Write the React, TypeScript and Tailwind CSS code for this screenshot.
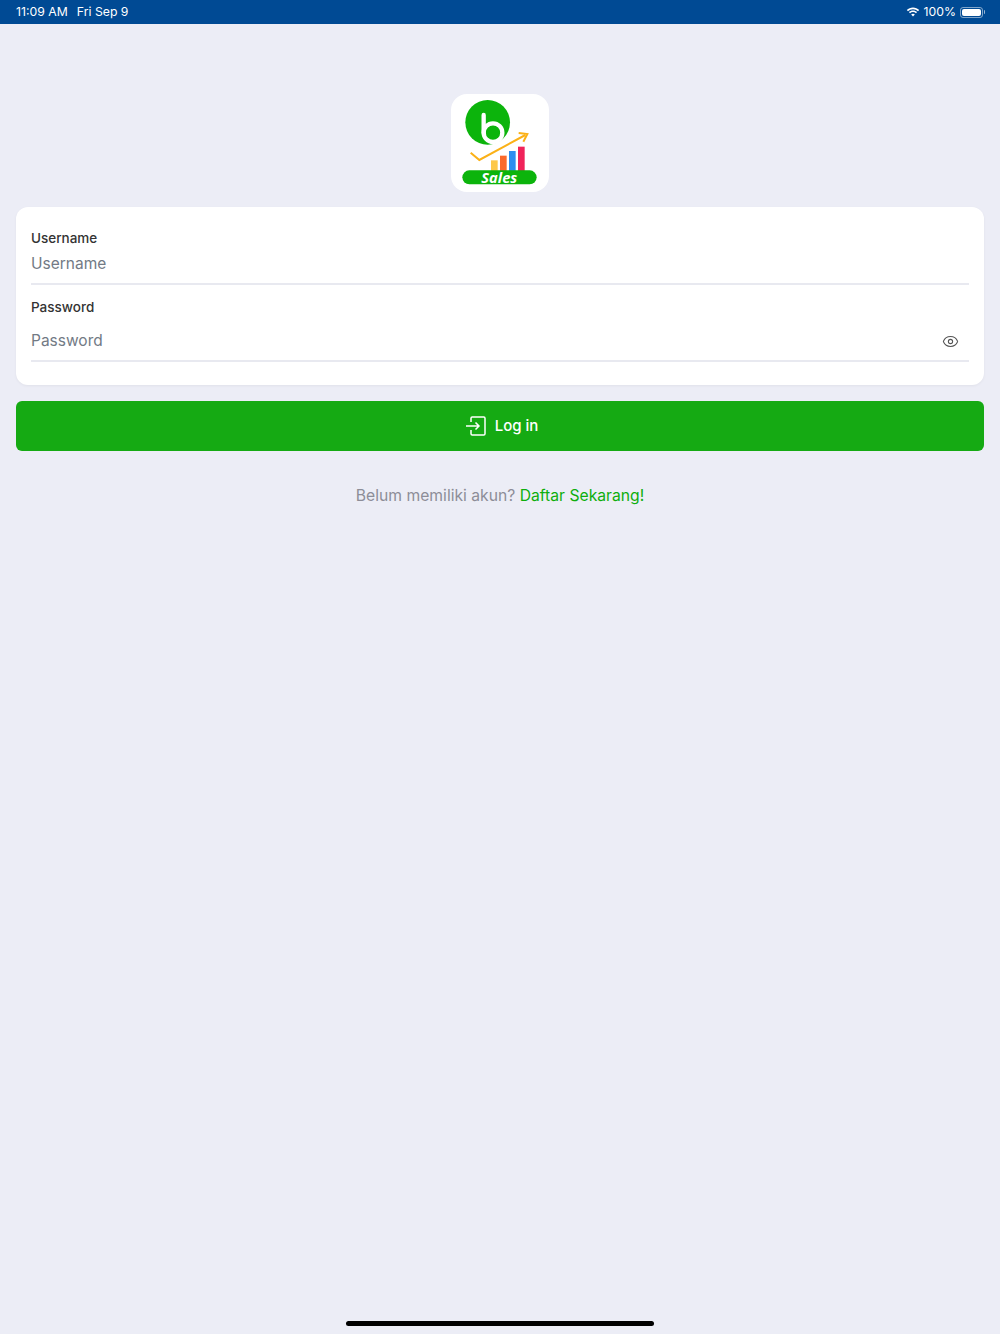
import { Eye } from "lucide-react";

function Logo() {
  return (
    <svg viewBox="33 27 294 294" className="h-full w-full">
      <circle cx="143" cy="112" r="67" fill="#0cb40c" />
      <path d="M131 90V143" fill="none" stroke="#fff" strokeWidth="13" strokeLinecap="round" />
      <circle cx="159" cy="143" r="28" fill="none" stroke="#fff" strokeWidth="13" />
      <path d="M92 203L118 225L256 150" fill="none" stroke="#fbb117" strokeWidth="6" />
      <path d="M236 144L262 147L250 170" fill="none" stroke="#fbb117" strokeWidth="6" />
      <rect x="153" y="226" width="20" height="32" fill="#fdc84a" />
      <rect x="180" y="212" width="20" height="46" fill="#fb6a2c" />
      <rect x="207" y="198" width="20" height="60" fill="#2d8ef0" />
      <rect x="234" y="185" width="20" height="73" fill="#f0235a" />
      <rect x="67" y="256" width="223" height="42" rx="21" fill="#0cb40c" />
      <text x="178" y="293" textAnchor="middle" fill="#fff" fontSize="44" fontWeight="700" fontStyle="italic" fontFamily="'Open Sans', sans-serif">Sales</text>
    </svg>
  );
}

function LoginIcon() {
  return (
    <svg viewBox="0 0 20 20" className="h-5 w-5" fill="none" stroke="#fff" strokeWidth="1.5">
      <path d="M5 6V2.200A1.200 1.200 0 0 1 6.200 1H17.800A1.200 1.200 0 0 1 19 2.200V17.800A1.200 1.200 0 0 1 17.800 19H6.200A1.200 1.200 0 0 1 5 17.800V14" />
      <path d="M0 10H13M9.500 6.500L13 10L9.500 13.500" />
    </svg>
  );
}

function WifiIcon() {
  return (
    <svg viewBox="0 0 14 10" className="h-[10px] w-[14px]" fill="#fff">
      <path d="M7 2.200C9 2.200 10.700 3 12 4.200L13.200 3C11.600 1.400 9.400 .4 7 .4S2.400 1.400 .8 3L2 4.200C3.300 3 5 2.200 7 2.200Z" />
      <path d="M7 5C8.200 5 9.200 5.400 10 6.200L11.100 5.100C10 4 8.600 3.400 7 3.400S4 4 2.900 5.100L4 6.200C4.800 5.400 5.800 5 7 5Z" />
      <path d="M7 6.700C6.300 6.700 5.700 7 5.200 7.400L7 9.500L8.800 7.400C8.300 7 7.700 6.700 7 6.700Z" />
    </svg>
  );
}

export default function App() {
  return (
    <div className="flex h-[1334px] w-full flex-col bg-[#ecedf6] font-['Inter',sans-serif]">
      <div className="flex h-6 shrink-0 items-center justify-between bg-[#004a94] pl-4 pr-[15px] text-[12.25px] text-white">
        <div className="flex gap-[9px]">
          <span>11:09 AM</span>
          <span>Fri Sep 9</span>
        </div>
        <div className="flex items-center gap-1">
          <WifiIcon />
          <span>100%</span>
          <div className="flex items-center">
            <div className="h-[11px] w-[23px] rounded-[3px] border border-white/50 p-px">
              <div className="h-full w-full rounded-[2px] bg-white" />
            </div>
            <div className="ml-px h-1 w-px rounded-r-sm bg-white/60" />
          </div>
        </div>
      </div>

      <div className="flex flex-1 flex-col px-4">
        <div className="mt-[70px] h-[98px] w-[98px] self-center overflow-hidden rounded-2xl bg-white">
          <Logo />
        </div>

        <div className="mt-[15px] h-[178px] rounded-xl bg-white px-[15px] pt-[22px] shadow-[0_1px_3px_rgba(0,0,0,0.05)]">
          <p className="text-[13.5px] font-medium leading-[18px] text-[#333]">Username</p>
          <div className="flex h-[38px] items-center border-b-2 border-[#e8e9f0] pb-[3px] text-[15.5px] text-[#727a85]">
            Username
          </div>
          <p className="mt-[13px] text-[13.5px] font-medium leading-[18px] text-[#333]">Password</p>
          <div className="mt-[7px] flex h-[39px] items-center justify-between border-b-2 border-[#e8e9f0] pb-[2px] pr-[10px] text-[15.5px] text-[#727a85]">
            <span>Password</span>
            <Eye size={17} strokeWidth={1.5} className="translate-y-px text-[#555]" />
          </div>
        </div>

        <button className="mt-4 flex h-[50px] items-center justify-center gap-[9px] rounded-md bg-[#15aa13] pl-[4px] text-[15px] font-medium text-white">
          <LoginIcon />
          Log in
        </button>

        <p className="mt-[34px] text-center text-[15.7px] leading-[22px] text-[#8d8d98]">
          Belum memiliki akun? <span className="text-[#0dae0d]">Daftar Sekarang!</span>
        </p>

        <div className="mb-2 mt-auto h-[5px] w-[308px] self-center rounded-full bg-black" />
      </div>
    </div>
  );
}
